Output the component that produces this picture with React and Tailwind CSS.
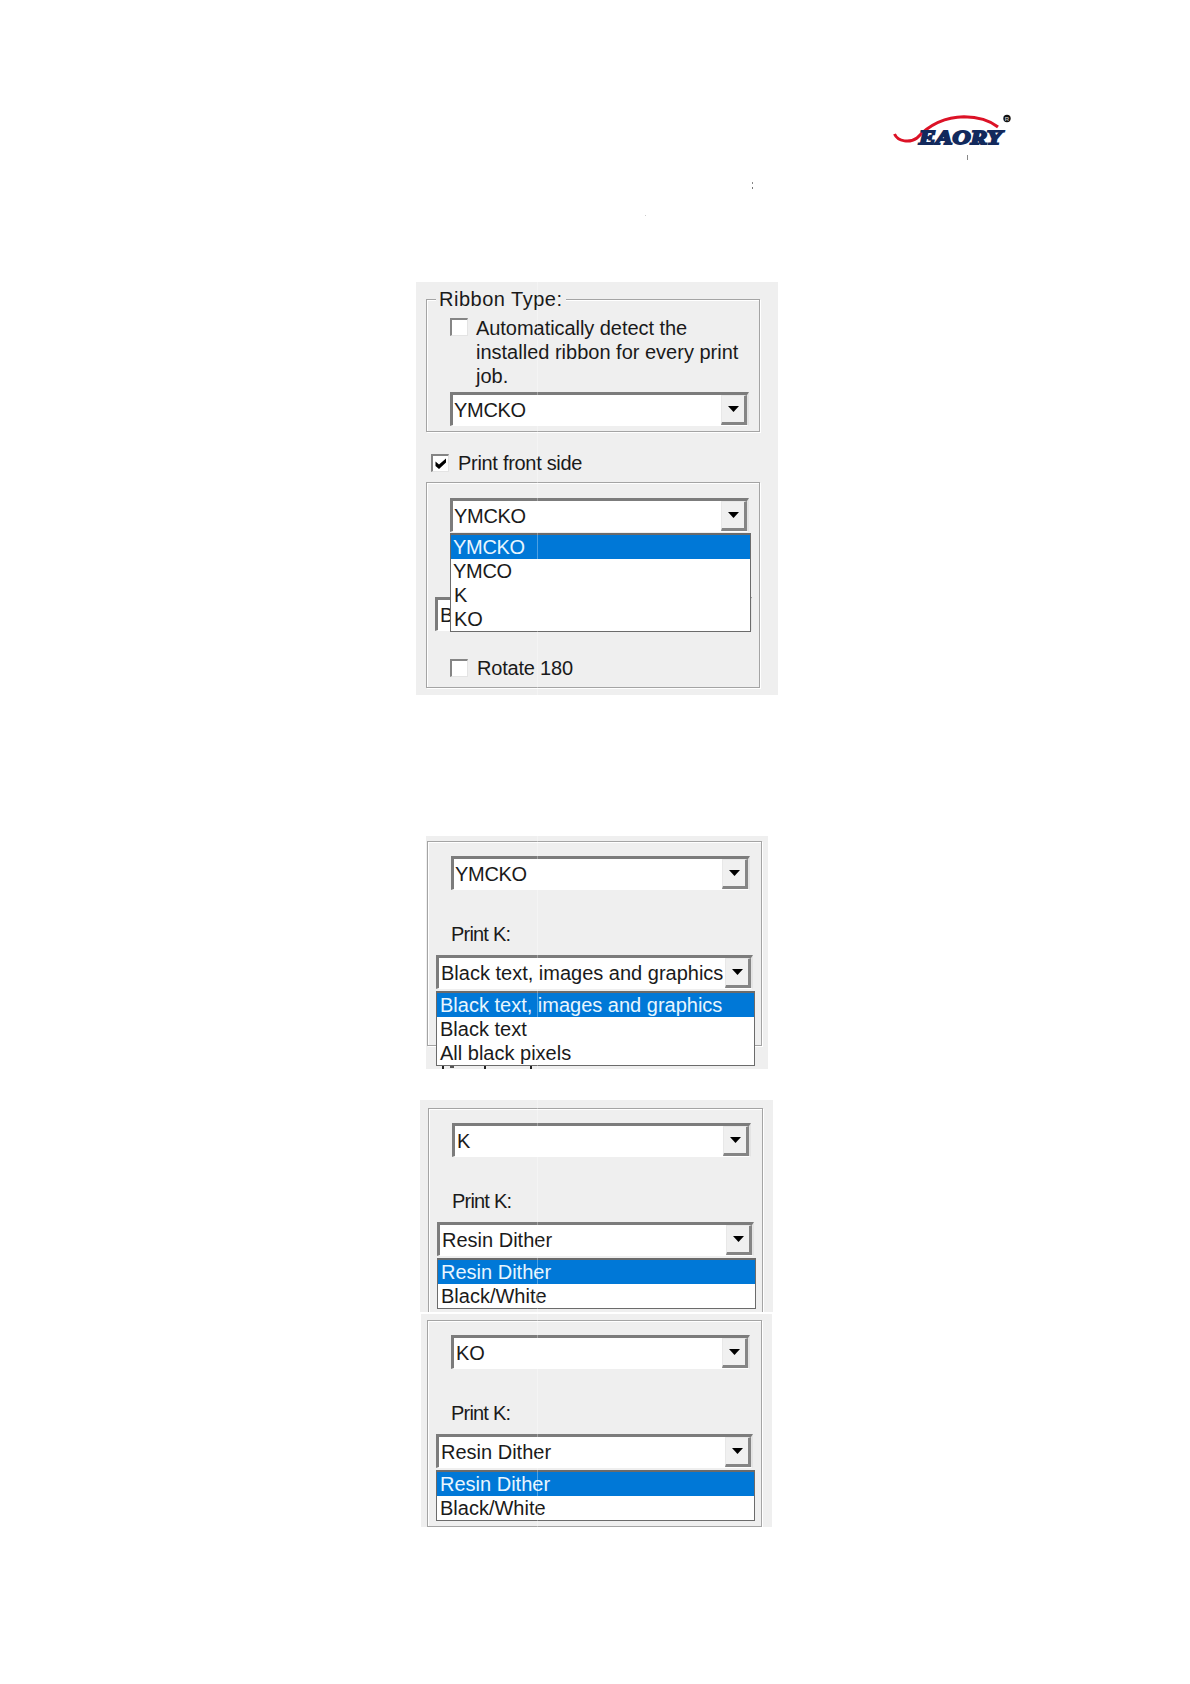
import React from 'react';
import clsx from 'clsx';

const modePanels = [
  {
    id: 'ymcko',
    panel: 'ml-[426px] mt-[141px] w-[342px] h-[233px] pl-px pt-[5px]',
    group: 'h-[205px]',
    ribbon: 'YMCKO',
    value: 'Black text, images and graphics',
    options: ['Black text, images and graphics', 'Black text', 'All black pixels'],
    covered: true
  },
  {
    id: 'k',
    panel: 'ml-[420px] mt-[31px] w-[353px] h-[212px] pl-[8px] pt-2',
    group: 'h-[220px]',
    ribbon: 'K',
    value: 'Resin Dither',
    options: ['Resin Dither', 'Black/White']
  },
  {
    id: 'ko',
    panel: 'ml-[421px] mt-[2px] w-[351px] h-[213px] pl-[6px] pt-[6px]',
    group: 'h-[207px]',
    ribbon: 'KO',
    value: 'Resin Dither',
    options: ['Resin Dither', 'Black/White']
  }
];

function Logo() {
  return (
    <svg className="ml-[890px] block h-[40px] w-[126px]" viewBox="890 110 126 40">
      <path
        d="M894.500 134 C898 142 910 143 917 138 C932 122 948 117 964 116.800 C979 117 991 121.500 998 127"
        fill="none"
        stroke="#dc1226"
        strokeWidth="3"
      />
      <text
        x="919"
        y="143.500"
        textLength="83"
        lengthAdjust="spacingAndGlyphs"
        fill="#12295c"
        stroke="#12295c"
        strokeWidth="1.800"
        className="font-['Liberation_Serif',serif] text-[19px] font-bold italic"
      >
        EAORY
      </text>
      <circle cx="1007" cy="118.500" r="3.700" fill="#111" />
      <text x="1004.800" y="121" fill="#bbb" className="font-['Liberation_Sans',sans-serif] text-[6px] font-bold">
        R
      </text>
    </svg>
  );
}

function Checkbox({ checked }) {
  return (
    <span className="flex h-[18px] w-[18px] shrink-0 items-center justify-center border-t-2 border-l-2 border-r border-b border-t-[#858585] border-l-[#858585] border-r-[#e4e4e4] border-b-[#e4e4e4] bg-white">
      {checked && (
        <svg className="h-3 w-3" viewBox="0 0 12 12">
          <path d="M0.500 3.500 L4 6.500 L11 0.500 V4.500 L4 11 L0.500 8 Z" fill="#000" />
        </svg>
      )}
    </span>
  );
}

function Combo({ value, className }) {
  return (
    <div
      className={clsx(
        'flex h-[34px] items-stretch border-t-[3px] border-l-[3px] border-r-2 border-b border-t-[#7c7c7c] border-l-[#7c7c7c] border-r-[#e4e4e4] border-b-white bg-white',
        className
      )}
    >
      <span className="min-w-0 flex-1 pt-[3px] pl-[2px] whitespace-nowrap">
        <span className={clsx(value === 'YMCKO' && '-ml-px tracking-[-0.3px]')}>{value}</span>
      </span>
      <span className="flex w-[26px] shrink-0 items-center justify-center border-t border-l border-r-[3px] border-b-[3px] border-t-[#e8e8e8] border-l-[#e8e8e8] border-r-[#858585] border-b-[#858585] bg-[#f0f0f0]">
        <svg className="ml-px h-[6px] w-[11px]" viewBox="0 0 11 6">
          <path d="M0 0 H11 L5.500 6 Z" fill="#000" />
        </svg>
      </span>
    </div>
  );
}

function OptionList({ options, className }) {
  return (
    <ul className={clsx('absolute z-10 border border-t-2 border-[#6b6b6b] bg-white', className)}>
      {options.map((option, index) => (
        <li
          key={option}
          className={clsx('h-6 pl-[3px] whitespace-nowrap', index === 0 && 'bg-[#0078d7] text-[#e8f6ff]')}
        >
          <span className={clsx(option.startsWith('YMC') && '-ml-px tracking-[-0.3px]')}>{option}</span>
        </li>
      ))}
    </ul>
  );
}

function Group({ className, children }) {
  return (
    <div className={clsx('relative border border-[#a4a4a4] shadow-[inset_1px_1px_0_#fff,1px_1px_0_#fff]', className)}>
      {children}
    </div>
  );
}

function RibbonPanel() {
  return (
    <section className="ml-[416px] h-[413px] w-[362px] bg-[#efefef] pt-[17px] pl-[10px]">
      <Group className="h-[133px] w-[334px] pl-[23px]">
        <h2 className="relative -mt-[13px] -ml-[14px] w-[130px] bg-[#efefef] pl-[3px] tracking-[0.5px]">Ribbon Type:</h2>
        <label className="mt-[5px] flex gap-[8px]">
          <span className="pt-[2px]">
            <Checkbox />
          </span>
          <span className="w-[270px]">
            <span className="tracking-[-0.05px]">Automatically detect the</span>
            <br />
            installed ribbon for every print
            <br />
            job.
          </span>
        </label>
        <Combo value="YMCKO" className="mt-[4px] w-[299px]" />
      </Group>

      <label className="mt-[19px] ml-[5px] flex items-center gap-[9px]">
        <Checkbox checked />
        <span className="tracking-[-0.3px]">Print front side</span>
      </label>

      <Group className="mt-[7px] h-[206px] w-[334px] pt-[15px]">
        <Combo value="YMCKO" className="ml-[23px] w-[299px]" />
        <OptionList options={['YMCKO', 'YMCO', 'K', 'KO']} className="top-[50px] left-[23px] w-[301px]" />
        <Combo value="B" className="mt-[65px] ml-[8px] w-[317px]" />
        <label className="mt-[25px] ml-[23px] flex items-center gap-[9px]">
          <Checkbox />
          <span className="tracking-[-0.2px]">Rotate 180</span>
        </label>
      </Group>
    </section>
  );
}

function ModePanel({ item }) {
  return (
    <section className={clsx('overflow-hidden bg-[#efefef]', item.panel)}>
      <Group className={clsx('w-[335px] pt-[14px] pl-[8px]', item.group)}>
        <Combo value={item.ribbon} className="ml-[15px] w-[299px]" />
        <p className="mt-[32px] ml-[15px] tracking-[-0.8px]">Print K:</p>
        <Combo value={item.value} className="mt-[9px] w-[317px]" />
        <OptionList options={item.options} className="top-[149px] left-[8px] w-[319px]" />
        {/* tops of the control that the open list covers */}
        {item.covered && (
          <div className="mt-[77px] ml-[6px] flex h-[3px]">
            <span className="h-[3px] w-[2px] bg-[#222]" />
            <span className="ml-[6px] h-[2px] w-[4px] bg-[#555]" />
            <span className="ml-[30px] h-[3px] w-[2px] bg-[#222]" />
            <span className="ml-[44px] h-[3px] w-[2px] bg-[#222]" />
          </div>
        )}
      </Group>
    </section>
  );
}

function App() {
  return (
    <div className="relative min-h-[1684px] w-[1190px] bg-white font-['Liberation_Sans',Arial,sans-serif] text-[20px] leading-6 text-[#1a1a1a]">
      <header className="h-[282px] pt-[110px]">
        <Logo />
        {/* stray print marks under the logo */}
        <span className="absolute top-[155px] left-[967px] h-[5px] w-px bg-[#888]" />
        <span className="absolute top-[182px] left-[752px] h-[2px] w-px bg-[#888]" />
        <span className="absolute top-[187px] left-[752px] h-[2px] w-px bg-[#777]" />
        <span className="absolute top-[215px] left-[645px] h-px w-px bg-[#ccc]" />
      </header>

      <main>
        <RibbonPanel />
        {modePanels.map((item) => (
          <ModePanel key={item.id} item={item} />
        ))}
      </main>

      {/* scan seam running through the panels */}
      <span className="absolute top-[282px] left-[537px] z-20 h-[1245px] w-px bg-white/30" />
    </div>
  );
}

export default App;
